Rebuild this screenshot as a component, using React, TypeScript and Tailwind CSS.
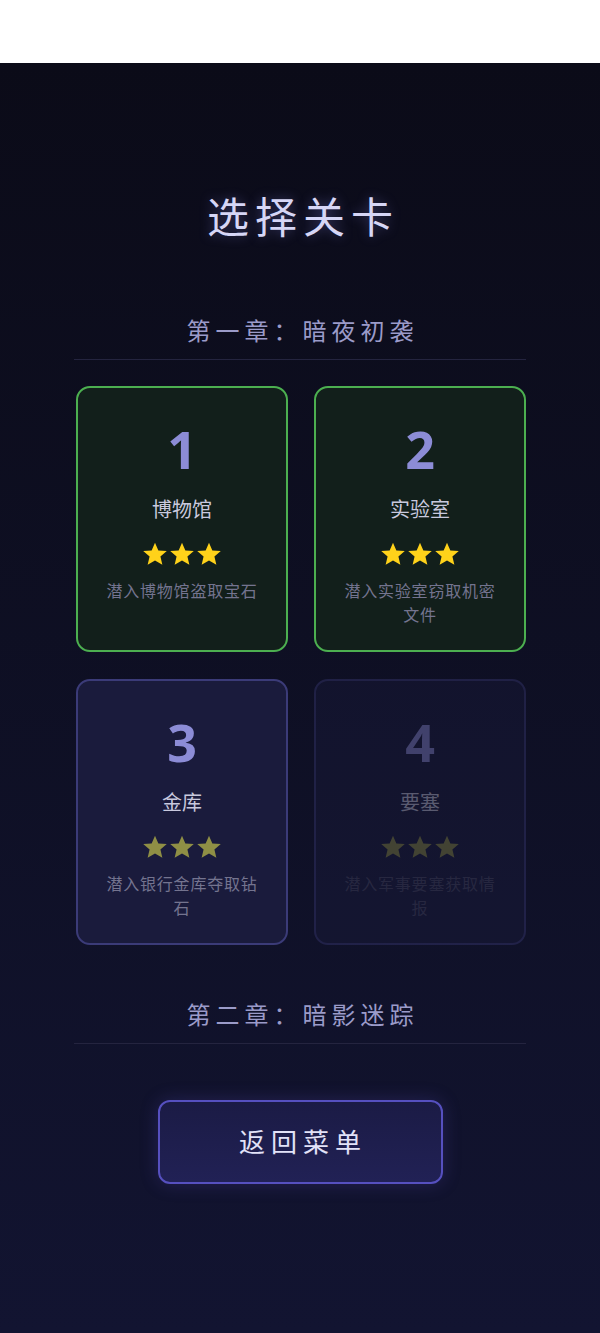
import React from "react";

const FONT = '"Noto Sans", "Noto Sans CJK SC", sans-serif';

function Star({ color }: { color: string }) {
  return (
    <svg width="26" height="26" viewBox="0 0 24 24">
      <path
        d="M12 1.5l3.1 7.2 7.8.6-5.9 5.1 1.8 7.6L12 18l-6.8 4 1.8-7.6-5.9-5.1 7.8-.6z"
        fill={color}
      />
    </svg>
  );
}

type Level = {
  n: number;
  name: string;
  desc: string;
  state: "done" | "open" | "locked";
};

const levels: Level[] = [
  { n: 1, name: "博物馆", desc: "潜入博物馆盗取宝石", state: "done" },
  { n: 2, name: "实验室", desc: "潜入实验室窃取机密文件", state: "done" },
  { n: 3, name: "金库", desc: "潜入银行金库夺取钻石", state: "open" },
  { n: 4, name: "要塞", desc: "潜入军事要塞获取情报", state: "locked" },
];

function Card({ l }: { l: Level }) {
  const base =
    "flex flex-col items-center h-[266px] rounded-[14px] border-2 px-[22px] pt-[32px]";
  const cls =
    l.state === "done"
      ? "border-[#4caf50] bg-[#121f1b]"
      : l.state === "open"
      ? "border-[#3b3b78] bg-[#1a1b3c]"
      : "border-[#3b3b78] bg-[#1a1b3c] opacity-40";
  const starColor = l.state === "done" ? "#ffd21a" : "#8f8f45";
  const descColor = l.state === "locked" ? "text-[#4a4a66]" : "text-[#74748f]";
  return (
    <div className={`${base} ${cls}`}>
      <div className="text-[52px] leading-[58px] font-bold text-[#8c8cd6]">{l.n}</div>
      <div className="mt-[18px] text-[20px] leading-[28px] text-[#c9c9de]">{l.name}</div>
      <div className="mt-[17px] flex gap-[1px]">
        <Star color={starColor} />
        <Star color={starColor} />
        <Star color={starColor} />
      </div>
      <div className={`mt-[12px] text-center text-[16px] leading-[24px] tracking-[0.8px] ${descColor}`}>
        {l.desc}
      </div>
    </div>
  );
}

function Chapter({ title }: { title: string }) {
  return (
    <div className="border-b border-[#24243f] pb-[13px] pl-[5px] text-center text-[24px] leading-[30px] tracking-[5px] text-[#9b9bc9]">
      {title}
    </div>
  );
}

export default function App() {
  return (
    <div style={{ fontFamily: FONT }} className="w-[600px] min-h-[1333px] bg-white">
      <div className="h-[63px] bg-white" />
      <div className="min-h-[1270px] bg-gradient-to-b from-[#0b0b18] to-[#121431] px-[74px] pt-[130px]">
        <h1 className="pl-[6px] text-center text-[42px] leading-[48px] tracking-[6px] text-[#d6d6f6] [text-shadow:0_0_12px_rgba(150,150,255,0.35)]">
          选择关卡
        </h1>
        <div className="mt-[75px]">
          <Chapter title="第一章：暗夜初袭" />
        </div>
        <div className="mt-[26px] grid grid-cols-2 gap-x-[26px] gap-y-[27px] pl-[2px]">
          {levels.map((l) => (
            <Card key={l.n} l={l} />
          ))}
        </div>
        <div className="mt-[55px]">
          <Chapter title="第二章：暗影迷踪" />
        </div>
        <div className="mt-[56px] flex justify-center">
          <button className="h-[84px] w-[285px] rounded-[12px] border-2 border-[#5650bf] bg-gradient-to-b from-[#1b1b45] to-[#212155] pl-[6px] text-[26px] tracking-[6px] text-[#e2e2f8] shadow-[0_0_18px_rgba(90,80,200,0.25)]">
            返回菜单
          </button>
        </div>
      </div>
    </div>
  );
}
